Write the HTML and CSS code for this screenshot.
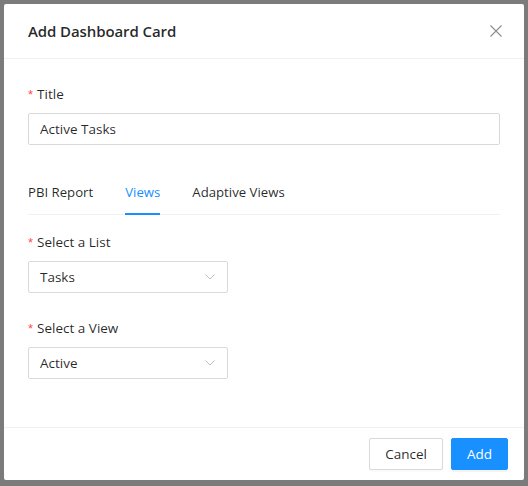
FILE: index.html
```html
<!DOCTYPE html>
<html>
<head>
<meta charset="utf-8">
<link rel="stylesheet" href="styles.css">
</head>
<body>
<div class="modal">
  <div class="modal-header">
    <div class="modal-title">Add Dashboard Card</div>
    <button class="close" aria-label="Close">
      <svg width="12" height="12" viewBox="0 0 12 12"><path d="M0.5 0.5L11.5 11.5M11.5 0.5L0.5 11.5" stroke="rgba(0,0,0,0.45)" stroke-width="1.1" fill="none"/></svg>
    </button>
  </div>
  <div class="modal-body">
    <div class="form-item">
      <div class="label"><span class="req">*</span>Title</div>
      <div class="input">Active Tasks</div>
    </div>
    <div class="tabs">
      <div class="tab">PBI Report</div>
      <div class="tab active">Views</div>
      <div class="tab">Adaptive Views</div>
    </div>
    <div class="form-item">
      <div class="label"><span class="req">*</span>Select a List</div>
      <div class="select"><span>Tasks</span>
        <svg width="10" height="6" viewBox="0 0 10 6"><path d="M0.5 0.5L5 5L9.5 0.5" stroke="#bfbfbf" stroke-width="1" fill="none"/></svg>
      </div>
    </div>
    <div class="form-item">
      <div class="label"><span class="req">*</span>Select a View</div>
      <div class="select"><span>Active</span>
        <svg width="10" height="6" viewBox="0 0 10 6"><path d="M0.5 0.5L5 5L9.5 0.5" stroke="#bfbfbf" stroke-width="1" fill="none"/></svg>
      </div>
    </div>
  </div>
  <div class="modal-footer">
    <button class="btn">Cancel</button>
    <button class="btn primary">Add</button>
  </div>
</div>
</body>
</html>
```
FILE: styles.css
```css
html, body {
  margin: 0;
  padding: 0;
  background: #7b7b7b;
  width: 528px;
  height: 486px;
  overflow: hidden;
}
body {
  font-family: "Open Sans", "Noto Sans", sans-serif;
  font-size: 14px;
  color: rgba(0,0,0,0.85);
  padding: 4px;
  box-sizing: border-box;
}
.modal {
  width: 520px;
  height: 476px;
  background: #fff;
  border-radius: 2px;
  display: flex;
  flex-direction: column;
}
.modal-header {
  height: 54px;
  padding: 0 22px 0 24px;
  border-bottom: 1px solid #f0f0f0;
  display: flex;
  align-items: center;
  justify-content: space-between;
}
.modal-title {
  font-size: 15px;
  font-weight: 600;
  line-height: 22px;
  color: rgba(0,0,0,0.85);
  letter-spacing: -0.1px;
}
.close {
  border: 0;
  background: none;
  padding: 0;
  width: 12px;
  height: 12px;
  display: flex;
}
.modal-body {
  padding: 24px 24px 0;
  flex: 1;
}
.form-item {
  margin-bottom: 24px;
}
.label {
  height: 22px;
  line-height: 22px;
  padding-bottom: 8px;
  font-size: 13.5px;
}
.req {
  color: #ff4d4f;
  margin-right: 4px;
  font-family: "Liberation Sans", sans-serif;
  font-size: 13px;
}
.input, .select {
  height: 32px;
  box-sizing: border-box;
  border: 1px solid #d9d9d9;
  border-radius: 2px;
  padding: 0 11px;
  line-height: 30px;
  font-size: 13.5px;
}
.select {
  width: 200px;
  display: flex;
  align-items: center;
  justify-content: space-between;
  padding-right: 12px;
}
.select svg {
  display: block;
}
.tabs {
  display: flex;
  border-bottom: 1px solid #f0f0f0;
  margin-bottom: 16px;
  height: 45px;
}
.tab {
  padding: 12px 0;
  line-height: 22px;
  margin-right: 32px;
  font-size: 13.2px;
  box-sizing: border-box;
  height: 46px;
}
.tab.active {
  color: #1890ff;
  border-bottom: 2px solid #1890ff;
}
.modal-footer {
  border-top: 1px solid #f0f0f0;
  padding: 10px 16px;
  display: flex;
  justify-content: flex-end;
  gap: 8px;
}
.btn {
  height: 32px;
  padding: 0 15px;
  border: 1px solid #d9d9d9;
  border-radius: 2px;
  background: #fff;
  font-family: inherit;
  font-size: 13.5px;
  color: rgba(0,0,0,0.85);
  box-shadow: 0 2px 0 rgba(0,0,0,0.015);
}
.btn.primary {
  background: #1890ff;
  border-color: #1890ff;
  color: #fff;
  box-shadow: 0 2px 0 rgba(0,0,0,0.045);
}
```
